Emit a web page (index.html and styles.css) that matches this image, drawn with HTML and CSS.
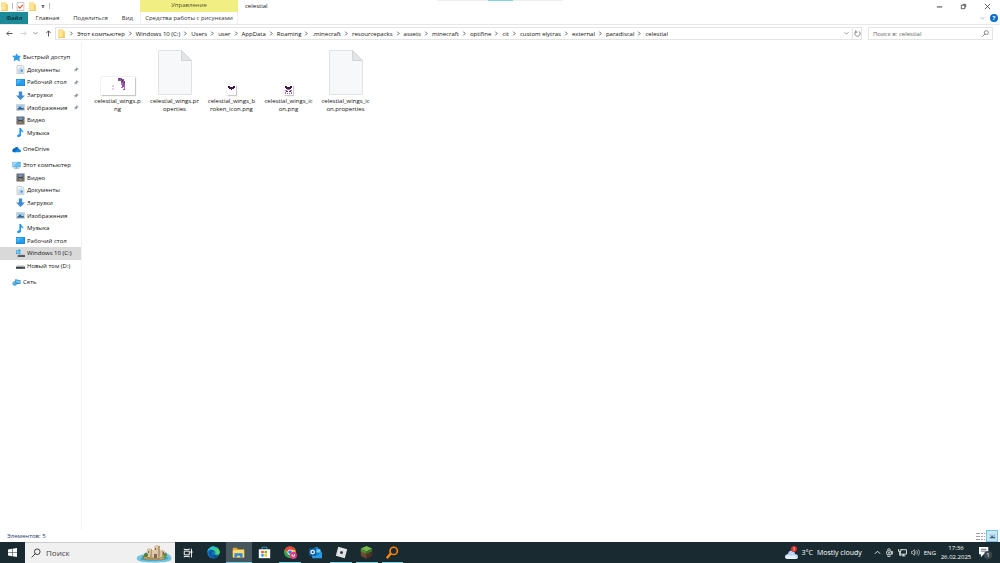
FILE: index.html
```html
<!DOCTYPE html>
<html lang="ru">
<head>
  <meta charset="UTF-8">
  <meta name="viewport" content="width=device-width, initial-scale=1.0">
  <title>celestial</title>
  <link rel="stylesheet" href="styles.css">
</head>
<body>
  <!-- shared icons -->
  <svg class="sprite" aria-hidden="true">
    <symbol id="folder" viewBox="0 0 16 16"><path fill="#f3cf62" d="M2 1h9v3h3v11H2z"/><path fill="#ffe59a" d="M2 2h8v13H2z"/><path fill="#e2b33f" d="M2 15h12v1H2z"/></symbol>
    <symbol id="star" viewBox="0 0 16 16"><path fill="#2f9ce8" d="M8 1l3 4 5 0-3 4 1 6-6-3-5 3 1-6-4-4 6 0z"/></symbol>
    <symbol id="docs" viewBox="0 0 16 16"><path fill="#fafcfd" stroke="#8fa3ae" d="M2 .5h9l3 3v12H2z"/><path stroke="#7da9c8" d="M7 4h4M4 7h8M4 9h3M4 11h3M4 13h8"/><path fill="#3d94d6" d="M8 8h4v4H8z"/></symbol>
    <symbol id="desktop" viewBox="0 0 16 16"><path fill="#1477c9" d="M0 2h16v12H0z"/><path fill="#22a3f2" d="M1 3h14v9H1z"/><path fill="#49b9fa" d="M1 12L10 3H1z"/></symbol>
    <symbol id="down" viewBox="0 0 16 16"><path fill="#3d8bd4" d="M5 1h6v7h5l-8 8-8-8h5z"/></symbol>
    <symbol id="images" viewBox="0 0 16 16"><path fill="#f8fafb" stroke="#9aa6ae" d="M.5 3h15v10H.5z"/><path fill="#8fc6ed" d="M2 4h12v4H2z"/><path fill="#34688e" d="M2 10l5-4 4 3 3-1v4H2z"/></symbol>
    <symbol id="video" viewBox="0 0 16 16"><path fill="#3d434b" d="M1 1h14v14H1z"/><path fill="#7893b6" d="M4 2h8v5H4z"/><path fill="#967c64" d="M4 9h8v5H4z"/><path stroke="#cbd0d6" stroke-dasharray="2 1" d="M2.500 1v14M13.500 1v14"/></symbol>
    <symbol id="music" viewBox="0 0 16 16"><path fill="#1f96e8" d="M6 0h3c0 4 5 4 4 9-1-3-3-3-4-3v6c0 5-7 5-7 2 0-2 2-3 4-3z"/></symbol>
    <symbol id="onedrive" viewBox="0 0 20 16"><path fill="#0b66bd" d="M1 9c1-4 4-4 5-4 3-5 9-2 9 2l-7 7H4c-3 0-4-3-3-5z"/><path fill="#1689df" d="M5 14l7-7c4-1 8 1 8 5 0 1-1 2-3 2z"/></symbol>
    <symbol id="pc" viewBox="0 0 20 16"><path fill="#4e91bf" d="M1 0h18v12H1z"/><path fill="#63c1f5" d="M2 1h16v10H2z"/><path fill="#a5ddfa" d="M2 11L12 1H2z"/><path fill="#79a3bc" d="M8 12h4v2h4v1H4v-1h4z"/></symbol>
    <symbol id="disk" viewBox="0 0 16 16"><path fill="#d7dadd" d="M3 7h10l3 3H0z"/><path fill="#40464b" d="M0 10h16v4H0z"/><path fill="#77d28b" d="M12 12h2v1h-2z"/></symbol>
    <symbol id="windisk" viewBox="0 0 16 16"><path fill="#1ba3e8" d="M0 2h3v3H0zM4 1h4v4H4zM0 6h3v3H0zM4 6h4v3H4z"/><path fill="#c2c7cb" d="M5 9h9l2 2H3z"/><path fill="#3e474d" d="M3 11h13v3H3z"/></symbol>
    <symbol id="network" viewBox="0 0 20 16"><path fill="#2680bd" d="M7 1l12 2v8L7 12z"/><path fill="#71c8f5" d="M8 3l10 1v5L8 9z"/><circle cx="6" cy="10" r="5" fill="#3498d3"/><path fill="none" stroke="#a5dcf5" d="M2 8l8 4M6 5c-3 4-2 7 0 10"/></symbol>
    <symbol id="pin" viewBox="0 0 16 16"><path fill="#8e979e" d="M9 1l6 6-2 1-1-1-3 3 0 3-2 1-2-3-4 4-1-1 4-4-3-2 1-2h3l3-3-1-1z"/></symbol>
    <symbol id="mag" viewBox="0 0 16 16"><g fill="none" stroke="currentColor" stroke-width="1.500"><circle cx="10" cy="6" r="4.500"/><path d="M7 9l-6 6"/></g></symbol>
    <symbol id="chev" viewBox="0 0 8 8"><path fill="none" stroke="currentColor" stroke-width="1.500" d="M2 1l3 3-3 3"/></symbol>
    <symbol id="chevdown" viewBox="0 0 8 8"><path fill="none" stroke="currentColor" d="M1 2l3 3 3-3"/></symbol>
    <symbol id="arrow" viewBox="0 0 16 16"><path fill="none" stroke="currentColor" stroke-width="2" d="M15 8H2M7 3L2 8l5 5"/></symbol>
    <symbol id="file" viewBox="0 0 34 45"><path fill="#f6f8f9" stroke="#dfe1e2" d="M.5.5h23l10 10v34H.5z"/><path fill="#e2e4e6" stroke="#d2d5d7" d="M23.500.5v10h10z"/></symbol>
  </svg>

  <div class="window">
    <header class="titlebar">
      <div class="quick">
        <svg class="icon"><use href="#folder"/></svg>
        <span class="sep"></span>
        <button class="plain" aria-label="Свойства"><svg class="icon" viewBox="0 0 16 16"><path fill="#fff" stroke="#9c9c9c" d="M2 1h12v14H2z"/><path fill="none" stroke="#e0572f" stroke-width="2" d="M4 8l3 3 5-6"/></svg></button>
        <button class="plain" aria-label="Новая папка"><svg class="icon"><use href="#folder"/></svg></button>
        <button class="plain" aria-label="Настройка панели"><svg class="icon-s" viewBox="0 0 8 8"><path fill="#333" d="M2 2h4v1H2zM2 4h4L4 6z"/></svg></button>
        <span class="sep"></span>
      </div>
      <div class="context">Управление</div>
      <h1>celestial</h1>
      <div class="snap"><span></span></div>
      <div class="controls">
        <button class="plain" aria-label="Свернуть"><svg class="icon-s" viewBox="0 0 8 8"><path stroke="#222" d="M1 4.500h6"/></svg></button>
        <button class="plain" aria-label="Восстановить"><svg class="icon-s" viewBox="0 0 8 8"><path fill="none" stroke="#222" stroke-width=".8" d="M1.500 2.500h4v4h-4zM3 1.500h3.500V5"/></svg></button>
        <button class="plain" aria-label="Закрыть"><svg class="icon-s" viewBox="0 0 8 8"><path stroke="#222" stroke-width=".8" d="M1 1l6 6M7 1L1 7"/></svg></button>
      </div>
    </header>

    <nav class="ribbon">
      <div class="tabs">
        <button class="tab-file">Файл</button>
        <button class="tab">Главная</button>
        <button class="tab">Поделиться</button>
        <button class="tab">Вид</button>
      </div>
      <button class="tab-tools">Средства работы с рисунками</button>
      <div class="ribbon-end">
        <button class="plain" aria-label="Развернуть ленту"><svg class="icon-xs"><use href="#chevdown"/></svg></button>
        <button class="help" aria-label="Справка">?</button>
      </div>
    </nav>

    <div class="address">
      <div class="history">
        <button class="plain" aria-label="Назад"><svg class="icon-s"><use href="#arrow"/></svg></button>
        <button class="plain off" aria-label="Вперед"><svg class="icon-s flip"><use href="#arrow"/></svg></button>
        <button class="plain" aria-label="Последние"><svg class="icon-xs"><use href="#chevdown"/></svg></button>
        <button class="plain" aria-label="Вверх"><svg class="icon-s up"><use href="#arrow"/></svg></button>
      </div>
      <div class="path">
        <svg class="icon"><use href="#folder"/></svg>
        <div class="crumbs">
          <svg><use href="#chev"/></svg><a href="#">Этот компьютер</a>
          <svg><use href="#chev"/></svg><a href="#">Windows 10 (C:)</a>
          <svg><use href="#chev"/></svg><a href="#">Users</a>
          <svg><use href="#chev"/></svg><a href="#">user</a>
          <svg><use href="#chev"/></svg><a href="#">AppData</a>
          <svg><use href="#chev"/></svg><a href="#">Roaming</a>
          <svg><use href="#chev"/></svg><a href="#">.minecraft</a>
          <svg><use href="#chev"/></svg><a href="#">resourcepacks</a>
          <svg><use href="#chev"/></svg><a href="#">assets</a>
          <svg><use href="#chev"/></svg><a href="#">minecraft</a>
          <svg><use href="#chev"/></svg><a href="#">optifine</a>
          <svg><use href="#chev"/></svg><a href="#">cit</a>
          <svg><use href="#chev"/></svg><a href="#">custom elytras</a>
          <svg><use href="#chev"/></svg><a href="#">external</a>
          <svg><use href="#chev"/></svg><a href="#">paradiscal</a>
          <svg><use href="#chev"/></svg><a href="#">celestial</a>
        </div>
        <button class="plain" aria-label="Предыдущие расположения"><svg class="icon-xs"><use href="#chevdown"/></svg></button>
        <button class="refresh" aria-label="Обновить"><svg class="icon-s" viewBox="0 0 16 16"><path fill="none" stroke="#555" stroke-width="1.500" d="M5 3a6 6 0 1 0 6 0M4 1v4h4"/></svg></button>
      </div>
      <label class="find">
        <input type="search" placeholder="Поиск в: celestial" aria-label="Поиск в: celestial">
        <svg class="icon-s"><use href="#mag"/></svg>
      </label>
    </div>

    <div class="body">
      <nav class="tree">
        <ul class="group quick-group">
          <li class="root"><a href="#"><svg><use href="#star"/></svg>Быстрый доступ</a></li>
          <li><a href="#"><svg><use href="#docs"/></svg>Документы</a><svg class="pin"><use href="#pin"/></svg></li>
          <li><a href="#"><svg><use href="#desktop"/></svg>Рабочий стол</a><svg class="pin"><use href="#pin"/></svg></li>
          <li><a href="#"><svg><use href="#down"/></svg>Загрузки</a><svg class="pin"><use href="#pin"/></svg></li>
          <li><a href="#"><svg><use href="#images"/></svg>Изображения</a><svg class="pin"><use href="#pin"/></svg></li>
          <li><a href="#"><svg><use href="#video"/></svg>Видео</a></li>
          <li><a href="#"><svg><use href="#music"/></svg>Музыка</a></li>
        </ul>
        <ul class="group">
          <li class="root"><a href="#"><svg><use href="#onedrive"/></svg>OneDrive</a></li>
        </ul>
        <ul class="group pc-group">
          <li class="root"><a href="#"><svg><use href="#pc"/></svg>Этот компьютер</a></li>
          <li><a href="#"><svg><use href="#video"/></svg>Видео</a></li>
          <li><a href="#"><svg><use href="#docs"/></svg>Документы</a></li>
          <li><a href="#"><svg><use href="#down"/></svg>Загрузки</a></li>
          <li><a href="#"><svg><use href="#images"/></svg>Изображения</a></li>
          <li><a href="#"><svg><use href="#music"/></svg>Музыка</a></li>
          <li><a href="#"><svg><use href="#desktop"/></svg>Рабочий стол</a></li>
          <li class="selected"><a href="#"><svg><use href="#windisk"/></svg>Windows 10 (C:)</a></li>
          <li><a href="#"><svg><use href="#disk"/></svg>Новый том (D:)</a></li>
        </ul>
        <ul class="group">
          <li class="root"><a href="#"><svg><use href="#network"/></svg>Сеть</a></li>
        </ul>
      </nav>

      <main class="files">
        <figure>
          <div class="thumb"><svg class="thumb-wide" viewBox="0 0 34 18"><path fill="#8a5596" d="M17 1h4v1h2v2h1v4h-2V6h-2V4h-3z"/><path fill="#5e2a6c" d="M18 1h1v1h-1zM21 3h1v2h-1zM20 2h1v1h-1zM23 5h1v1h-1z"/><path fill="#b06bbd" d="M20 6h2v2h-2zM23 8h1v4h-1zM20 10h2v1h-2z"/><path fill="#8f459e" d="M21 8h2v2h-2zM22 12h2v1h-2z"/><path stroke="#c99bd2" stroke-dasharray="2 1" d="M12 8v5"/></svg></div>
          <figcaption>celestial_wings.p<br>ng</figcaption>
        </figure>
        <figure>
          <div class="thumb"><svg class="thumb-file"><use href="#file"/></svg></div>
          <figcaption>celestial_wings.pr<br>operties</figcaption>
        </figure>
        <figure>
          <div class="thumb"><svg class="thumb-small" viewBox="0 0 9 10"><path fill="#3c1944" d="M1 1h2v1h3V1h2v2H7v1H5v1H4V4H2V3H1z"/></svg></div>
          <figcaption>celestial_wings_b<br>roken_icon.png</figcaption>
        </figure>
        <figure>
          <div class="thumb"><svg class="thumb-small" viewBox="0 0 9 10"><path fill="#3c1944" d="M1 1h2v1h3V1h2v2H7v1H2V3H1z"/><path fill="#a35faf" d="M3 4h3v1H3zM1 5h2v1H1zM6 5h2v1H6zM1 7h1v2H1zM7 7h1v2H7zM3 8h1v1H3zM5 8h1v1H5z"/><path fill="#5c286a" d="M2 6h2v1H2zM5 6h2v1H5z"/></svg></div>
          <figcaption>celestial_wings_ic<br>on.png</figcaption>
        </figure>
        <figure>
          <div class="thumb"><svg class="thumb-file"><use href="#file"/></svg></div>
          <figcaption>celestial_wings_ic<br>on.properties</figcaption>
        </figure>
      </main>
    </div>

    <footer class="status">
      <span>Элементов: 5</span>
      <div class="views">
        <button class="plain" aria-label="Таблица"><svg class="icon" viewBox="0 0 9 9"><path stroke="#a0a0a0" stroke-dasharray="4 1 2 1" d="M0 1.500h9M0 4.500h9M0 7.500h9"/></svg></button>
        <button class="view-on" aria-label="Крупные значки"><svg class="icon-s"><use href="#images"/></svg></button>
      </div>
    </footer>
  </div>

  <div class="taskbar">
    <button class="start" aria-label="Пуск"><svg class="icon" viewBox="0 0 16 16"><path fill="#fff" d="M0 2.500l7-1v6H0zM8 1.400L16 0v7.500H8zM0 8.500h7v6l-7-1zM8 8.500h8V16l-8-1.400z"/></svg></button>
    <label class="search">
      <svg class="icon-m"><use href="#mag"/></svg>
      <input type="search" placeholder="Поиск" aria-label="Поиск">
      <svg class="castle" viewBox="0 0 36 19">
        <path fill="#74c4dd" d="M1 14c0-4 6-2 8-5 3-2 5-1 8-2 6-2 12 0 15 3 4 2 5 6 1 7-6 2-26 2-30 0-2-1-3-2-2-3z"/><path fill="#3a9dc4" d="M4 15c6-3 22-3 29-1-2 3-24 4-29 1z"/>
        <ellipse cx="18" cy="13" rx="12" ry="3" fill="#6d8b3b"/><path fill="#b28b5c" d="M7 14h22l-4 2H11z"/>
        <path fill="#dcc6a4" d="M11 5l2-1 3 1v1h2V2l3-1 3 1v4h3l2 1v6l-9 1-9-1z"/><path fill="#b39a7b" d="M15 5l1 0v8h-2zM22 2l2 0v11h-2zM26 7h1v6h-1z"/>
        <path fill="#7f6650" d="M12 7h1v2h-1zM19 4h1v2h-1zM18 10h3v4h-3zM27 8h1v2h-1z"/>
        <circle cx="10" cy="11" r="2" fill="#507935"/><circle cx="29" cy="11" r="2" fill="#68883c"/><path fill="#d9a441" d="M8 13h3v1H8zM24 14h4v1h-4z"/>
      </svg>
    </label>
    <div class="apps">
      <button aria-label="Представление задач"><svg class="icon-m" viewBox="0 0 16 16"><path fill="none" stroke="#fff" stroke-width="1.500" d="M2 5h8v6H2zM2 1v1.500h8V1M2 15v-1.500h8V15M13.500 1v14"/><path fill="#fff" d="M12 5h3v3h-3z"/></svg></button>
      <button aria-label="Edge"><svg class="icon-l" viewBox="0 0 16 16"><circle cx="8" cy="8" r="7.500" fill="#1282cf"/><path fill="#4ed36f" d="M5 1c5-2 11 2 11 7-1 3-5 3-6 2 2-4-2-6-5-5z"/><path fill="#25bcdf" d="M0 8C1 3 4 1 7 .5c3 0 6 2 7 4C8 2 3 3 0 8z"/><path fill="#0b56a5" d="M2 7c3-3 6-2 7-1-5 0-4 8 5 7-5 5-13 1-12-6z"/><path fill="#17262b" d="M8 7c-2 2 0 5 4 5h3c-5 3-9-1-7-5z"/></svg></button>
      <button class="open active" aria-label="Проводник"><svg class="icon-l" viewBox="0 0 16 16"><path fill="#e7a82c" d="M1 2h5l1 2h8v10H1z"/><path fill="#ffdc72" d="M1 5h14v9H1z"/><path fill="#3188d8" d="M3 9h10v5h-3v-2H6v2H3z"/></svg></button>
      <button aria-label="Microsoft Store"><svg class="icon-l" viewBox="0 0 16 16"><path fill="none" stroke="#41acd9" d="M5 4V1.500h6V4"/><path fill="#fff" d="M1 4h14v11H1z"/><path fill="#f25022" d="M4 6h3v3H4z"/><path fill="#7fba00" d="M8 6h3v3H8z"/><path fill="#00a4ef" d="M4 10h3v3H4z"/><path fill="#ffb900" d="M8 10h3v3H8z"/></svg></button>
      <button class="open" aria-label="Chrome"><svg class="icon-l" viewBox="0 0 16 16"><circle cx="7.500" cy="7.500" r="7" fill="#f5c63a"/><path fill="#e64539" d="M1 4c3-5 11-5 13 1H8L5 9z"/><path fill="#2ba455" d="M1 4l4 6 3 2-2 2.500C1 14-1 9 1 4z"/><circle cx="7.500" cy="7.500" r="3.200" fill="#fff"/><circle cx="7.500" cy="7.500" r="2.400" fill="#397fe6"/><circle cx="11.500" cy="11.500" r="4.500" fill="#dc3e83"/><path fill="none" stroke="#fff" d="M10 10v2.500h3V10"/></svg></button>
      <button aria-label="Outlook"><svg class="icon-l" viewBox="0 0 16 16"><path fill="#1684d5" d="M4 3l6-2 5 5v8H4z"/><path fill="#71ccf7" d="M8 4h6v4H8z"/><path fill="#2c9de5" d="M4 9l6 3 6-5v8H4z"/><path fill="#0a59a7" d="M0 3h9v9H0z"/><circle cx="4.500" cy="7.500" r="2.200" fill="none" stroke="#fff" stroke-width="1.500"/></svg></button>
      <button class="open" aria-label="Roblox"><svg class="icon-l" viewBox="0 0 16 16"><path fill="#e1e4e6" d="M4 1l11 3-3 11-11-3z"/><path fill="#26343a" d="M7 6l3 1-1 3-3-1z"/></svg></button>
      <button class="open" aria-label="Minecraft"><svg class="icon-l" viewBox="0 0 16 16"><path fill="#79b94b" d="M8 0l7 3-7 4-7-4z"/><path fill="#6e472f" d="M1 3l7 4v9l-7-4z"/><path fill="#4e3023" d="M15 3L8 7v9l7-4z"/><path fill="#4e8f35" d="M1 3l7 4v3L6 8v2L4 7v2L1 6z"/><path fill="#3c752c" d="M15 3L8 7v3l2-2v2l2-3v1l3-2z"/></svg></button>
      <button class="open" aria-label="Поиск файлов"><svg class="icon-l" viewBox="0 0 16 16"><circle cx="9.500" cy="6" r="4.500" fill="none" stroke="#ff8110" stroke-width="2"/><path stroke="#ff8110" stroke-width="3" d="M6 9l-5 6"/></svg></button>
    </div>
    <div class="tray">
      <button class="weather">
        <svg viewBox="0 0 14 14"><path fill="#b9d4f5" d="M1 11c0-3 3-3 3-3 1-5 7-4 7 0 4 0 4 5 1 5H3c-1 0-2-1-2-2z"/><path fill="#e6f0fc" d="M1 11c3-3 5-1 6-1 3-2 5 0 6 2l-1 1H3z"/><circle cx="10" cy="3" r="3" fill="#d92e22"/><path stroke="#fff" stroke-width=".8" d="M9.500 2L10 1.500v3"/></svg>
        <span>3°C</span><span>Mostly cloudy</span>
      </button>
      <button aria-label="Скрытые значки"><svg class="icon-s up" viewBox="0 0 16 16"><path fill="none" stroke="#fff" stroke-width="2" d="M11 2L5 8l6 6"/></svg></button>
      <button aria-label="Meet Now"><svg class="icon" viewBox="0 0 16 16"><g fill="none" stroke="#fff" stroke-width="1.500"><rect x="3" y="5" width="8" height="7" rx="2"/><circle cx="7" cy="8.500" r="1"/><path d="M11 7l2-1v5l-2-1M4 3c1-2 5-2 6 0M4 14c1 2 5 2 6 0"/></g></svg></button>
      <button aria-label="Сеть"><svg class="icon" viewBox="0 0 16 16"><path fill="none" stroke="#fff" stroke-width="1.500" d="M5 3h10v8H4V7M1 2v4h4V2M3 6v7h3M7 14h6M10 11v3"/></svg></button>
      <button aria-label="Громкость"><svg class="icon" viewBox="0 0 16 16"><path fill="none" stroke="#fff" d="M1 6v4h2l3 3V3L3 6zM8 6c1 1 1 3 0 4M10 4c2 2 2 6 0 8M12 2c4 3 4 9 0 12"/></svg></button>
      <button>ENG</button>
      <button class="clock"><time>17:36</time><time>26.02.2025</time></button>
      <button class="notes" aria-label="Уведомления"><svg viewBox="0 0 14 14"><path fill="#fff" d="M0 1h10v8H5l-3 3V9H0z"/><path stroke="#36444a" stroke-width=".8" d="M2 3.500h6M2 5.500h6"/></svg><span>1</span></button>
    </div>
  </div>
</body>
</html>
```
FILE: styles.css
```css
* { box-sizing: border-box; }
body { margin: 0; min-height: 100vh; display: flex; flex-direction: column; background: #fff; color: #111; font-family: "Open Sans", "Noto Sans", sans-serif; font-size: 6px; line-height: 8px; }
button, input { font: inherit; color: inherit; border: none; background: none; padding: 0; margin: 0; outline: none; }
button { display: flex; align-items: center; justify-content: center; }
a { color: inherit; text-decoration: none; }
svg { display: block; flex: none; }
ul { list-style: none; margin: 0; padding: 0; }
input { min-width: 0; flex: 1; appearance: none; }
.sprite { position: absolute; width: 0; height: 0; }
.icon { width: 9px; height: 9px; }
.icon-s { width: 7px; height: 7px; }
.icon-xs { width: 5px; height: 5px; }
.icon-m { width: 10px; height: 10px; }
.icon-l { width: 13px; height: 13px; }
.flip { transform: scaleX(-1); }
.up { transform: rotate(90deg); }

.window { flex: 1; display: flex; flex-direction: column; }

/* title bar */
.titlebar { position: relative; display: flex; height: 12px; align-items: center; }
.quick { display: flex; align-items: center; width: 140px; gap: 3px; }
.quick .icon-s { width: 6px; }
.sep { width: 1px; height: 6px; background: #bbb; }
.context { width: 98px; height: 12px; line-height: 11px; background: #f1ee83; color: #55552c; text-align: center; }
h1 { margin: 0 0 0 7px; font-size: 6px; font-weight: normal; color: #111; }
.snap { position: absolute; top: 0; left: 50%; width: 126px; margin-left: -63px; background: #efefef; }
.snap span { display: block; width: 25px; height: 1px; margin: 0 auto; background: #7fd3e4; }
.controls { display: flex; margin-left: auto; padding-right: 1px; }
.controls button { width: 24px; }

/* ribbon tabs */
.ribbon { display: flex; height: 13px; border-bottom: 1px solid #e8e8e8; color: #333; }
.tabs { display: flex; width: 140px; }
.tab-file { width: 29px; background: #1d8a99; color: #062c33; font-weight: 600; }
.tab { padding: 0 7px; }
.tab-tools { width: 98px; border: solid #eee; border-width: 0 1px; }
.ribbon-end { display: flex; align-items: center; gap: 5px; margin-left: auto; padding-right: 2px; color: #888; }
.help { width: 8px; height: 8px; border-radius: 50%; background: #0b6fc8; color: #fff; font-weight: bold; }

/* address row */
.address { display: flex; gap: 3px; padding: 2px 7px 2px 6px; height: 17px; }
.history { display: flex; align-items: center; width: 46px; justify-content: space-between; color: #444; }
.off { color: #ccc; }
.path { flex: 1; display: flex; align-items: center; gap: 3px; border: 1px solid #e4e4e4; padding-left: 1px; }
.crumbs { flex: 1; display: flex; align-items: center; gap: 3px; white-space: nowrap; }
.crumbs svg { width: 5px; height: 5px; color: #555; }
.path > button { color: #555; }
.path .refresh { width: 9px; height: 11px; border-left: 1px solid #e4e4e4; }
.find { display: flex; align-items: center; width: 125px; margin-left: 3px; border: 1px solid #e4e4e4; padding: 0 3px 0 4px; color: #555; }
.find input::placeholder { color: #666; }

/* folder tree and file list */
.body { flex: 1; display: flex; }
.tree { width: 82px; display: flex; flex-direction: column; gap: 4px; padding-top: 9px; border-right: 1px solid #f3f3f3; }
.group { display: flex; flex-direction: column; }
.group li { flex: 1; min-height: 12px; display: flex; align-items: center; justify-content: space-between; padding: 0 2px 0 16px; }
.quick-group { height: 88px; }
.pc-group { height: 113px; }
.group .root { padding-left: 12px; }
.tree a { display: flex; align-items: center; gap: 2px; white-space: nowrap; }
.tree a svg { width: 9px; height: 9px; }
.tree .pin { width: 5px; height: 5px; }
.group .selected { background: #d9d9d9; }
.files { flex: 1; display: grid; grid-template-columns: repeat(auto-fill, 57px); align-content: start; padding: 8px 7px; }
figure { margin: 0; text-align: center; }
.thumb { display: flex; align-items: flex-end; justify-content: center; height: 47px; padding-bottom: 2px; }
.thumb-wide { width: 34px; height: 18px; background: #fff; box-shadow: 0 0 1px #aaa, 1px 1px 1px #ccc; }
.thumb-file { width: 34px; height: 45px; }
.thumb-small { width: 9px; height: 10px; background: #fff; box-shadow: 0 0 1px #bbb, 1px 1px 1px #ccc; }

.status { display: flex; align-items: center; justify-content: space-between; height: 12px; padding: 0 2px 0 7px; color: #1c3a6a; }
.views { display: flex; gap: 1px; }
.view-on { width: 12px; height: 12px; background: #cbe8f8; border: 1px solid #70c0e8; }

/* taskbar */
.taskbar { display: flex; height: 21px; background: #192b31; color: #fff; }
.start { width: 25px; }
.search { display: flex; align-items: center; gap: 5px; width: 150px; padding: 0 3px 0 6px; background: #f0f0f0; color: #333; border-top: 1px solid #ccc; }
.search input { font-size: 8px; line-height: 12px; }
.search input::placeholder { color: #444; }
.castle { width: 36px; height: 19px; }
.apps { display: flex; width: 230px; }
.apps button { flex: 1; position: relative; }
.apps .active { background: #48575d; }
.open::after { content: ""; position: absolute; left: 2px; right: 2px; bottom: 0; height: 1px; background: #76d3e6; }
.active::after { left: 0; right: 0; }
.tray { display: flex; align-items: center; gap: 4px; margin-left: auto; padding-right: 8px; }
.weather { gap: 4px; margin-right: 8px; font-size: 7px; }
.weather svg { width: 14px; height: 14px; }
.clock { flex-direction: column; width: 32px; line-height: 9px; }
.notes { position: relative; width: 16px; justify-content: flex-start; padding-left: 3px; }
.notes svg { width: 13px; height: 13px; }
.notes span { position: absolute; right: 0; top: 5px; width: 8px; height: 8px; border-radius: 50%; background: #3a484e; text-align: center; }
```
